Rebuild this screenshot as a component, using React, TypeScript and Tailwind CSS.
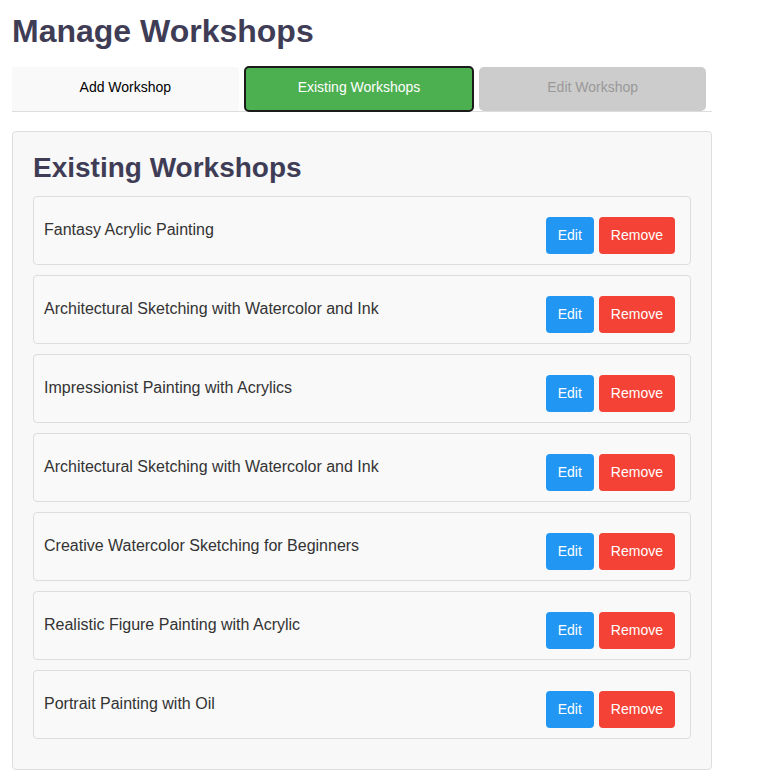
import React, { useState } from 'react';

const workshops = [
  'Fantasy Acrylic Painting',
  'Architectural Sketching with Watercolor and Ink',
  'Impressionist Painting with Acrylics',
  'Architectural Sketching with Watercolor and Ink',
  'Creative Watercolor Sketching for Beginners',
  'Realistic Figure Painting with Acrylic',
  'Portrait Painting with Oil',
];

export default function App() {
  const [tab, setTab] = useState('existing');

  return (
    <div className="min-h-screen bg-white px-[12px] pb-[4px] font-['Liberation_Sans',Arial,sans-serif]">
      <div className="w-[700px]">
        <h1 className="pt-[13px] text-[32px] font-bold leading-[37px] text-[#3f3d56]">
          Manage Workshops
        </h1>

        {/* Tabs */}
        <div className="mt-[17px] flex h-[45px] items-center border-b border-[#dddddd] pr-[1px]">
          <button
            onClick={() => setTab('add')}
            className="mr-[5px] h-[44px] flex-1 rounded-r-[3px] bg-[#f9f9f9] pb-[4px] text-[14px] text-black"
          >
            Add Workshop
          </button>
          <button
            onClick={() => setTab('existing')}
            className="relative mr-[5px] h-[46px] flex-1 rounded-[5px] border-2 border-[#1b1b1b] bg-[#4caf50] pb-[4px] text-[14px] text-white"
          >
            Existing Workshops
          </button>
          <button
            disabled
            className="mr-[5px] h-[44px] flex-1 rounded-[5px] bg-[#cccccc] pb-[4px] text-[14px] text-[#999999]"
          >
            Edit Workshop
          </button>
        </div>

        {/* Panel */}
        <div className="mt-[19px] rounded-[4px] border border-[#dddddd] bg-[#f8f8f8] px-[20px] pt-[20px] pb-[30px]">
          <h2 className="mb-[12px] text-[28px] font-bold leading-[32px] text-[#3f3d56]">
            Existing Workshops
          </h2>
          <div className="flex flex-col gap-[10px]">
            {workshops.map((w, i) => (
              <div
                key={i}
                className="flex items-start justify-between rounded-[4px] border border-[#dddddd] bg-[#f9f9f9] px-[10px] pt-[10px] pb-[10px]"
              >
                <span className="pt-[14px] text-[16px] leading-[18px] text-[#333333]">{w}</span>
                <div className="flex gap-[5px] pt-[10px] pr-[5px]">
                  <button className="h-[37px] rounded-[4px] bg-[#2196f3] px-[12px] text-[14px] text-white">
                    Edit
                  </button>
                  <button className="h-[37px] rounded-[4px] bg-[#f44336] px-[12px] text-[14px] text-white">
                    Remove
                  </button>
                </div>
              </div>
            ))}
          </div>
        </div>
      </div>
    </div>
  );
}
